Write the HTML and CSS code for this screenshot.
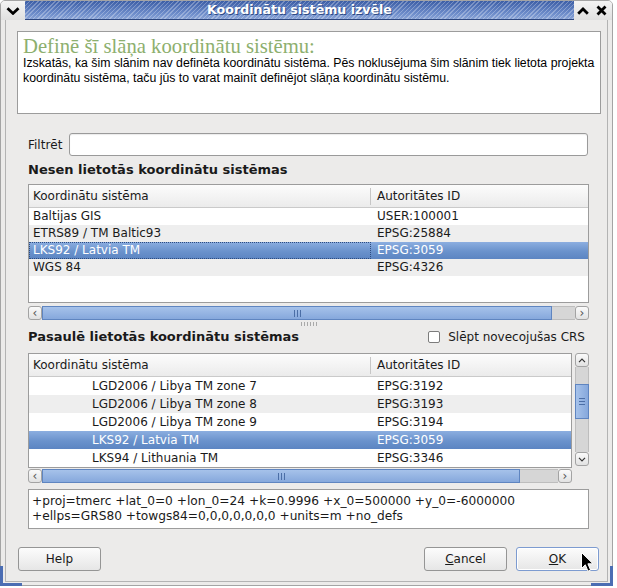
FILE: index.html
```html
<!DOCTYPE html>
<html lang="lv">
<head>
  <meta charset="UTF-8">
  <title>Koordinātu sistēmu izvēle</title>
  <link rel="stylesheet" href="styles.css">
</head>
<body>

  <div class="window">
    <div class="titlebar">
      <div class="tb-btn tb-menu">
        <svg width="14" height="8" viewBox="0 0 14 8"><path d="M1.5 1.2 L7 6.4 L12.5 1.2" fill="none" stroke="#000" stroke-width="2.8"/></svg>
      </div>
      <div class="tb-title">Koordinātu sistēmu izvēle</div>
      <div class="tb-btn tb-right">
        <svg width="12" height="8" viewBox="0 0 12 8"><path d="M1.2 6.8 L6 2 L10.8 6.8" fill="none" stroke="#000" stroke-width="2.8"/></svg>
        <svg width="11" height="11" viewBox="0 0 11 11"><path d="M1.5 1.5 L9.5 9.5 M9.5 1.5 L1.5 9.5" fill="none" stroke="#000" stroke-width="2.8"/></svg>
      </div>
    </div>

    <div class="frame">
      <div class="client">

        <div class="info">
          <h1>Definē šī slāņa koordinātu sistēmu:</h1>
          <p>Izskatās, ka šim slānim nav definēta koordinātu sistēma. Pēs noklusējuma šim slānim tiek lietota projekta<br>
          koordinātu sistēma, taču jūs to varat mainīt definējot slāņa koordinātu sistēmu.</p>
        </div>

        <div class="content">
          <div class="filter-row">
            <label for="filter">Filtrēt</label>
            <input type="text" id="filter">
          </div>

          <div class="section-title">Nesen lietotās koordinātu sistēmas</div>

          <div class="crs-table recent">
            <div class="crs-head"><div class="c1">Koordinātu sistēma</div><div class="c2">Autoritātes ID</div></div>
            <div class="crs-row"><div class="c1">Baltijas GIS</div><div class="c2">USER:100001</div></div>
            <div class="crs-row alt"><div class="c1">ETRS89 / TM Baltic93</div><div class="c2">EPSG:25884</div></div>
            <div class="crs-row sel"><div class="c1 focus">LKS92 / Latvia TM</div><div class="c2">EPSG:3059</div></div>
            <div class="crs-row alt"><div class="c1">WGS 84</div><div class="c2">EPSG:4326</div></div>
          </div>

          <div class="hscroll">
            <div class="sb-btn">‹</div>
            <div class="sb-thumb" style="width: 510px"><span class="grip-v"></span></div>
            <div class="sb-track"></div>
            <div class="sb-btn">›</div>
          </div>

          <div class="splitter"><span></span></div>

          <div class="section-row">
            <div class="section-title">Pasaulē lietotās koordinātu sistēmas</div>
            <label class="check"><span class="box"></span>Slēpt novecojušas CRS</label>
          </div>

          <div class="world">
            <div class="world-main">
              <div class="crs-table all">
                <div class="crs-head"><div class="c1">Koordinātu sistēma</div><div class="c2">Autoritātes ID</div></div>
                <div class="crs-row"><div class="c1 leaf">LGD2006 / Libya TM zone 7</div><div class="c2">EPSG:3192</div></div>
                <div class="crs-row alt"><div class="c1 leaf">LGD2006 / Libya TM zone 8</div><div class="c2">EPSG:3193</div></div>
                <div class="crs-row"><div class="c1 leaf">LGD2006 / Libya TM zone 9</div><div class="c2">EPSG:3194</div></div>
                <div class="crs-row sel"><div class="c1 leaf">LKS92 / Latvia TM</div><div class="c2">EPSG:3059</div></div>
                <div class="crs-row"><div class="c1 leaf">LKS94 / Lithuania TM</div><div class="c2">EPSG:3346</div></div>
              </div>
              <div class="hscroll">
                <div class="sb-btn">‹</div>
                <div class="sb-thumb" style="width: 478px"><span class="grip-v"></span></div>
                <div class="sb-track"></div>
                <div class="sb-btn">›</div>
              </div>
            </div>
            <div class="vscroll">
              <div class="sb-btn">
                <svg width="8" height="5" viewBox="0 0 8 5"><path d="M1 4.2 L4 1.2 L7 4.2" fill="none" stroke="#333" stroke-width="1.2"/></svg>
              </div>
              <div class="sb-track short"></div>
              <div class="sb-thumb-v"><span class="grip-h"></span></div>
              <div class="sb-track"></div>
              <div class="sb-btn">
                <svg width="8" height="5" viewBox="0 0 8 5"><path d="M1 0.8 L4 3.8 L7 0.8" fill="none" stroke="#333" stroke-width="1.2"/></svg>
              </div>
            </div>
          </div>

          <div class="proj">+proj=tmerc +lat_0=0 +lon_0=24 +k=0.9996 +x_0=500000 +y_0=-6000000<br>+ellps=GRS80 +towgs84=0,0,0,0,0,0,0 +units=m +no_defs</div>
        </div>

        <div class="buttons">
          <button>Help</button>
          <div class="spacer"></div>
          <button><u>C</u>ancel</button>
          <button class="default"><u>O</u>K</button>
        </div>

      </div>
    </div>

    <span class="corner left"></span>
    <span class="corner right"></span>

    <svg class="pointer" width="13" height="21" viewBox="0 0 13 21">
      <path d="M0.5 0.5 L0.5 16.5 L4.3 12.8 L7 19.2 L9.6 18.1 L6.9 11.8 L12 11.8 Z" fill="#000" stroke="#fff" stroke-width="1"/>
    </svg>
  </div>

</body>
</html>
```

FILE: styles.css
```css
* {
  box-sizing: border-box;
}
body {
  margin: 0;
  background: #fff;
  font-family: "DejaVu Sans", sans-serif;
  font-size: 12px;
  color: #1a1a1a;
}
.window {
  position: relative;
  width: 613px;
  height: 586px;
  background: #ecebea;
  border: 1px solid #a4a4a4;
  border-radius: 5px 5px 0 0;
  display: flex;
  flex-direction: column;
}

/* title bar */
.titlebar {
  height: 19px;
  display: flex;
  flex-shrink: 0;
}
.tb-btn {
  background: linear-gradient(#f4f4f4, #e0e0e0);
  display: flex;
  align-items: center;
  justify-content: center;
}
.tb-menu {
  width: 24px;
  border-radius: 4px 0 0 0;
}
.tb-right {
  width: 38px;
  gap: 7px;
  padding-right: 2px;
  border-radius: 0 4px 0 0;
}
.tb-title {
  flex: 1;
  color: #fff;
  font-weight: bold;
  font-size: 12.6px;
  text-align: center;
  line-height: 18px;
  text-shadow: 1px 1px 0 #2f4b86;
  border-bottom: 1px solid #2d4780;
  background:
    repeating-linear-gradient(135deg, rgba(255,255,255,0.28) 0 1px, rgba(255,255,255,0) 1px 3px),
    linear-gradient(#3c5ea6, #6d8cca 70%, #8aa4d6);
}

/* frame and client area */
.frame {
  flex: 1;
  padding: 0 4px 3px;
  display: flex;
}
.client {
  flex: 1;
  border: 1px solid #b3b3b3;
  border-top: none;
  display: flex;
  flex-direction: column;
}
.info {
  margin: 11px 0 0 11px;
  width: 584px;
  height: 83px;
  background: #fff;
  border: 1px solid #9c9c9c;
  padding: 4px 5px;
}
.info h1 {
  margin: 0;
  font-family: "Liberation Serif", serif;
  font-weight: normal;
  font-size: 20.7px;
  line-height: 20px;
  color: #8daf6e;
}
.info p {
  margin: 0;
  font-family: "Liberation Sans", Arial, sans-serif;
  font-size: 12.3px;
  line-height: 15px;
  color: #000;
  white-space: nowrap;
}
.content {
  padding-left: 22px;
  width: 583px;
}
.filter-row {
  margin-top: 19px;
  display: flex;
  align-items: center;
  gap: 7px;
}
.filter-row label {
  width: 34px;
}
.filter-row input {
  width: 519px;
  height: 23px;
  border: 1px solid #9a9a9a;
  border-radius: 3px;
  background: #fff;
  box-shadow: inset 0 1px 1px rgba(0,0,0,0.08);
}
.section-title {
  font-weight: bold;
  font-size: 13px;
  line-height: 16px;
  margin-top: 6px;
}
.section-row {
  display: flex;
  justify-content: space-between;
  align-items: center;
  height: 16px;
  margin-top: 1px;
  padding-right: 4px;
}
.section-row .section-title {
  margin-top: 0;
}
.check {
  display: flex;
  align-items: center;
  gap: 8px;
}
.check .box {
  width: 12px;
  height: 12px;
  border: 1px solid #7c7c7c;
  border-radius: 2px;
  background: #fff;
}

/* lists of coordinate systems */
.crs-table {
  border: 1px solid #9c9c9c;
  background: #fff;
  overflow: hidden;
  margin-top: 6px;
}
.recent {
  width: 561px;
  height: 119px;
}
.all {
  width: 544px;
  height: 115px;
  margin-top: 8px;
}
.crs-head {
  display: flex;
  align-items: center;
  height: 23px;
  background: linear-gradient(#fcfcfc, #ebebeb);
  border-bottom: 1px solid #cacaca;
}
.crs-head .c1 {
  border-right: 1px solid #c6c6c6;
  line-height: 17px;
}
.crs-row {
  display: flex;
  height: 17px;
  line-height: 17px;
  white-space: nowrap;
}
.all .crs-row {
  height: 18px;
  line-height: 18px;
}
.crs-row.alt {
  background: #eeeeee;
}
.crs-row.sel {
  background: linear-gradient(#8caee0, #6a92cc 55%, #5c85c2);
  color: #fff;
}
.c1 {
  width: 342px;
  padding-left: 4px;
  flex-shrink: 0;
}
.c1.leaf {
  padding-left: 63px;
}
.c1.focus {
  outline: 1px dotted #2d4c80;
  outline-offset: -1px;
}
.c2 {
  padding-left: 6px;
}

/* scroll bars */
.hscroll {
  display: flex;
  height: 14px;
  margin-top: 3px;
}
.world-main .hscroll {
  margin-top: 1px;
}
.sb-btn {
  width: 14px;
  height: 14px;
  border: 1px solid #a3a3a3;
  border-radius: 3px;
  background: linear-gradient(#fafafa, #e2e2e2);
  color: #555;
  font-size: 12px;
  line-height: 11px;
  text-align: center;
  display: flex;
  align-items: center;
  justify-content: center;
  flex-shrink: 0;
}
.sb-thumb {
  background: linear-gradient(#a6c2ea, #86a8dc);
  border: 1px solid #5f85c0;
  display: flex;
  align-items: center;
  justify-content: center;
}
.sb-track {
  flex: 1;
  background: #d6d6d6;
  border-top: 1px solid #bdbdbd;
  border-bottom: 1px solid #bdbdbd;
}
.grip-v {
  width: 7px;
  height: 7px;
  background: repeating-linear-gradient(90deg, #4b6ea6 0 1px, transparent 1px 3px);
}
.splitter {
  height: 8px;
  display: flex;
  align-items: center;
  justify-content: center;
}
.splitter span {
  width: 17px;
  height: 4px;
  background: radial-gradient(circle, #a9a9a9 0 0.6px, transparent 0.8px) 0 0 / 3px 2px;
}
.world {
  display: flex;
  gap: 3px;
}
.world-main {
  width: 544px;
}
.vscroll {
  margin-top: 8px;
  width: 14px;
  height: 113px;
  display: flex;
  flex-direction: column;
}
.vscroll .sb-track {
  border: none;
  border-left: 1px solid #bdbdbd;
  border-right: 1px solid #bdbdbd;
}
.vscroll .sb-track.short {
  flex: 0 0 17px;
}
.sb-thumb-v {
  height: 35px;
  background: linear-gradient(90deg, #a6c2ea, #86a8dc);
  border: 1px solid #5f85c0;
  display: flex;
  align-items: center;
  justify-content: center;
}
.grip-h {
  width: 6px;
  height: 7px;
  background: repeating-linear-gradient(180deg, #4b6ea6 0 1px, transparent 1px 3px);
}

.proj {
  margin-top: 6px;
  width: 561px;
  height: 40px;
  border: 1px solid #9c9c9c;
  background: #fff;
  padding: 4px 3px;
  font-size: 12.2px;
  line-height: 15px;
  white-space: nowrap;
}

/* dialog buttons */
.buttons {
  margin: 18px 0 0 12px;
  width: 581px;
  display: flex;
  gap: 9px;
}
.spacer {
  flex: 1;
}
button {
  width: 83px;
  height: 24px;
  font-family: "DejaVu Sans", sans-serif;
  font-size: 12px;
  color: #1a1a1a;
  border: 1px solid #959595;
  border-radius: 3px;
  background: linear-gradient(#fcfcfc, #e6e6e6);
  padding: 0;
}
button.default {
  border-color: #7d9bd0;
  box-shadow: inset 0 0 0 1px #fff;
}

/* window frame corners and mouse pointer */
.corner {
  position: absolute;
  bottom: -1px;
  width: 22px;
  height: 20px;
  border-bottom: 3px solid #4b6db3;
}
.corner.left {
  left: -1px;
  border-left: 3px solid #4b6db3;
}
.corner.right {
  right: -1px;
  border-right: 3px solid #4b6db3;
}
.pointer {
  position: absolute;
  left: 580px;
  top: 551px;
}
```
